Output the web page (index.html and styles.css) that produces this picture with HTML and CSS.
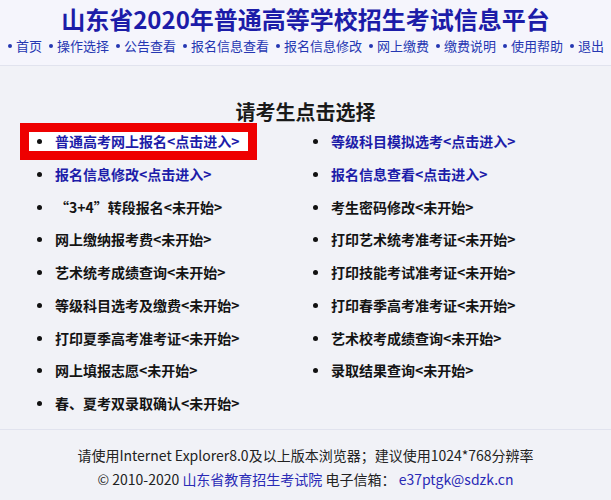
FILE: index.html
```html
<!DOCTYPE html>
<html lang="zh-CN">
<head>
<meta charset="utf-8">
<title>山东省2020年普通高等学校招生考试信息平台</title>
<link rel="stylesheet" href="styles.css">
</head>
<body>
<header class="header">
  <h1 class="title">山东省2020年普通高等学校招生考试信息平台</h1>
  <nav class="nav">
    <a class="nav-item">首页</a>
    <a class="nav-item">操作选择</a>
    <a class="nav-item">公告查看</a>
    <a class="nav-item">报名信息查看</a>
    <a class="nav-item">报名信息修改</a>
    <a class="nav-item">网上缴费</a>
    <a class="nav-item">缴费说明</a>
    <a class="nav-item">使用帮助</a>
    <a class="nav-item">退出</a>
  </nav>
</header>
<main class="main">
  <h2 class="heading">请考生点击选择</h2>
  <ul class="grid">
    <li class="item link selected"><span class="dot"></span>普通高考网上报名&lt;点击进入&gt;</li>
    <li class="item link"><span class="dot"></span>等级科目模拟选考&lt;点击进入&gt;</li>
    <li class="item link"><span class="dot"></span>报名信息修改&lt;点击进入&gt;</li>
    <li class="item link"><span class="dot"></span>报名信息查看&lt;点击进入&gt;</li>
    <li class="item"><span class="dot"></span>“3+4”转段报名&lt;未开始&gt;</li>
    <li class="item"><span class="dot"></span>考生密码修改&lt;未开始&gt;</li>
    <li class="item"><span class="dot"></span>网上缴纳报考费&lt;未开始&gt;</li>
    <li class="item"><span class="dot"></span>打印艺术统考准考证&lt;未开始&gt;</li>
    <li class="item"><span class="dot"></span>艺术统考成绩查询&lt;未开始&gt;</li>
    <li class="item"><span class="dot"></span>打印技能考试准考证&lt;未开始&gt;</li>
    <li class="item"><span class="dot"></span>等级科目选考及缴费&lt;未开始&gt;</li>
    <li class="item"><span class="dot"></span>打印春季高考准考证&lt;未开始&gt;</li>
    <li class="item"><span class="dot"></span>打印夏季高考准考证&lt;未开始&gt;</li>
    <li class="item"><span class="dot"></span>艺术校考成绩查询&lt;未开始&gt;</li>
    <li class="item"><span class="dot"></span>网上填报志愿&lt;未开始&gt;</li>
    <li class="item"><span class="dot"></span>录取结果查询&lt;未开始&gt;</li>
    <li class="item"><span class="dot"></span>春、夏考双录取确认&lt;未开始&gt;</li>
  </ul>
</main>
<footer class="footer">
  <p class="foot-line">请使用Internet Explorer8.0及以上版本浏览器；建议使用1024*768分辨率</p>
  <p class="foot-line">© 2010-2020 <a class="foot-link">山东省教育招生考试院</a> 电子信箱： <a class="foot-link">e37ptgk@sdzk.cn</a></p>
</footer>
</body>
</html>
```

FILE: styles.css
```css
html, body {
  margin: 0;
  padding: 0;
}
body {
  background: #f1f2f7;
  font-family: "Noto Sans CJK SC", "Noto Sans", sans-serif;
  color: #111;
  width: 611px;
  height: 500px;
  overflow: hidden;
}
.header {
  background: #f5f5fc;
  border-bottom: 1px solid #e1e3ee;
  height: 66px;
  box-sizing: border-box;
  padding-top: 4px;
}
.title {
  margin: 0;
  text-align: center;
  font-size: 24px;
  line-height: 30px;
  font-weight: 700;
  color: #1c1ca8;
  letter-spacing: 0;
}
.nav {
  margin-top: 2px;
  display: flex;
  justify-content: center;
  gap: 6px;
  font-size: 13px;
  line-height: 20px;
  color: #2537b2;
}
.nav-item {
  display: flex;
  align-items: center;
}
.nav-item::before {
  content: "";
  width: 4px;
  height: 4px;
  border-radius: 50%;
  background: #2537b2;
  margin-right: 4px;
  margin-left: 1px;
}
.main {
  padding-top: 32px;
  padding-bottom: 16px;
  border-bottom: 1px solid #e1e3ee;
}
.heading {
  margin: 0;
  text-align: center;
  font-size: 20px;
  line-height: 28px;
  font-weight: 700;
  color: #1a1a1a;
}
.grid {
  list-style: none;
  margin: 6px 0 0 29px;
  padding: 0;
  display: grid;
  grid-template-columns: 276px auto;
  row-gap: 13.75px;
  justify-items: start;
}
.item {
  display: flex;
  align-items: center;
  height: 19px;
  line-height: 19px;
  padding: 0 8px;
  font-size: 14px;
  font-weight: 700;
  color: #141414;
  white-space: nowrap;
}
.item.link {
  color: #1d1da9;
}
.item.selected {
  background: #ffffff;
  outline: 9px solid #ee0000;
}
.dot {
  width: 5px;
  height: 5px;
  border-radius: 50%;
  background: #111;
  margin-right: 13px;
  flex: none;
}
.footer {
  padding-top: 13px;
  text-align: center;
  font-size: 14px;
  color: #222;
}
.foot-line {
  margin: 0;
  line-height: 24px;
}
.foot-link {
  color: #2a2ab6;
}
```
